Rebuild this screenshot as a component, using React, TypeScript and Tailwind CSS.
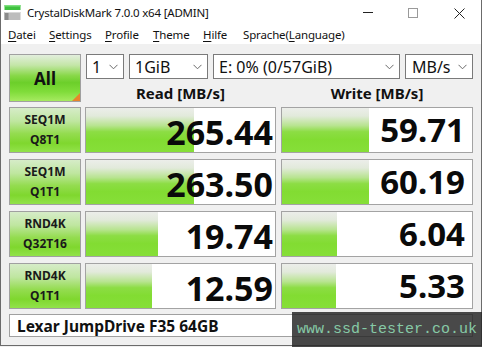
import React from "react";

const rows = [
  { l1: "SEQ1M", l2: "Q8T1", r: "265.44", w: "59.71", rw: 108, ww: 87 },
  { l1: "SEQ1M", l2: "Q1T1", r: "263.50", w: "60.19", rw: 108, ww: 87 },
  { l1: "RND4K", l2: "Q32T16", r: "19.74", w: "6.04", rw: 72, ww: 55 },
  { l1: "RND4K", l2: "Q1T1", r: "12.59", w: "5.33", rw: 66, ww: 54 },
];

const barBg =
  "linear-gradient(to bottom, #eceeea 0%, #e2eadb 18%, #b8e490 40%, #8cdd44 54%, #82dc32 72%, #86df38 100%)";
const labelBg =
  "bg-[linear-gradient(to_bottom,#d6ecc8_0%,#bfe6a0_30%,#94dc50_58%,#7fd72e_80%,#92e24a_100%)]";

function Chevron() {
  return (
    <svg width="9" height="6" viewBox="0 0 9 6" className="shrink-0">
      <polyline points="0.5,0.8 4.5,4.8 8.5,0.8" fill="none" stroke="#6a6a6a" strokeWidth="1" />
    </svg>
  );
}

function Select({ w, text, pl = 5 }: { w: number; text: string; pl?: number }) {
  return (
    <div
      className="h-[25px] border border-[#7a7a7a] bg-white flex items-center justify-between pr-[5px] text-[16px] text-[#111] leading-[20px]"
      style={{ width: w, paddingLeft: pl }}
    >
      <span className="pt-[1px]">{text}</span>
      <Chevron />
    </div>
  );
}

function BarBox({ value, bar, w, pr, pt, size }: { value: string; bar: number; w: number; pr: number; pt: number; size: number }) {
  return (
    <div className="relative h-[46px] border border-[#a3a3a3] bg-white" style={{ width: w }}>
      <div className="absolute left-0 top-0 bottom-0" style={{ width: bar, background: barBg }} />
      <div
        className="absolute inset-0 flex items-start justify-end font-bold leading-[36px] text-[#0a0a0a]"
        style={{ paddingRight: pr, paddingTop: pt, fontSize: size }}
      >
        {value}
      </div>
    </div>
  );
}

export default function App() {
  const menu = [
    { u: "D", rest: "atei", w: 41 },
    { u: "S", rest: "ettings", w: 56 },
    { u: "P", rest: "rofile", w: 48 },
    { u: "T", rest: "heme", w: 50 },
    { u: "H", rest: "ilfe", w: 40 },
  ];
  return (
    <div className="relative w-[482px] h-[347px] overflow-hidden bg-[#f0f0f0] font-['Noto_Sans',sans-serif]">
      <div className="h-[346px] flex flex-col border-l border-r border-b border-[#6b6b6b]">
        {/* title bar */}
        <div className="h-[25px] bg-white flex items-center shrink-0 relative">
          <svg width="17" height="16" viewBox="0 0 17 16" className="ml-[3px] mt-[1px]">
            <rect x="0.5" y="0" width="16" height="5" fill="#3fc13f" />
            <rect x="0.5" y="0" width="16" height="1.5" fill="#7ee07e" />
            <rect x="0.5" y="7" width="16" height="8" fill="#bdbdbd" />
            <rect x="0.5" y="7" width="4" height="8" fill="#8a8a8a" />
            <rect x="0.5" y="7" width="16" height="1" fill="#d8d8d8" />
          </svg>
          <span className="ml-[6px] text-[11.5px] text-[#111] tracking-[-0.2px]">CrystalDiskMark 7.0.0 x64 [ADMIN]</span>
          <div className="absolute left-[362px] top-[12px] w-[10px] h-[1px] bg-[#222]" />
          <div className="absolute left-[407px] top-[8px] w-[10px] h-[10px] border border-[#9a9a9a]" />
          <svg className="absolute left-[453px] top-[8px]" width="11" height="11" viewBox="0 0 11 11">
            <path d="M0.5 0.5 L10.5 10.5 M10.5 0.5 L0.5 10.5" stroke="#222" strokeWidth="1" />
          </svg>
        </div>
        {/* menu bar */}
        <div className="h-[20px] bg-white flex items-center pl-[7px] text-[11.5px] tracking-[-0.15px] text-[#111] shrink-0 border-b border-[#f0f0f0]">
          {menu.map((m) => (
            <span key={m.u + m.rest} style={{ width: m.w }} className="shrink-0">
              <span className="underline underline-offset-2">{m.u}</span>
              {m.rest}
            </span>
          ))}
          <span className="shrink-0">
            Sprache(<span className="underline underline-offset-2">L</span>anguage)
          </span>
        </div>
        {/* content */}
        <div className="flex-1 bg-[#f0f0f0] pl-[8px] pt-[9px]">
          <div className="flex">
            <div
              className={
                "relative w-[72px] h-[48px] border border-[#a0a0a0] flex items-center justify-center text-[17px] font-bold text-[#111] bg-[linear-gradient(to_bottom,#e2eedc_0%,#c4e6a8_22%,#88d848_45%,#6ccf2a_60%,#80dc3a_80%,#a6ea60_100%)]"
              }
            >
              <span className="pt-[1px]">All</span>
              <div className="absolute right-0 bottom-0 w-0 h-0 border-l-[8px] border-l-transparent border-b-[8px] border-b-[#e8842c]" />
            </div>
            <div className="ml-[4px] flex flex-col">
              <div className="flex gap-[5px] pl-[1px]">
                <Select w={38} text="1" />
                <Select w={79} text="1GiB" />
                <Select w={187} text="E: 0% (0/57GiB)" />
                <Select w={68} text="MB/s" pl={6} />
              </div>
              <div className="flex h-[23px] text-[15px] font-bold text-[#111] leading-[18px] pt-[5px]">
                <div className="w-[191px] text-center">Read [MB/s]</div>
                <div className="w-[192px] ml-[5px] text-center">Write [MB/s]</div>
              </div>
            </div>
          </div>
          <div className="flex flex-col gap-[6px] mt-[5px]">
            {rows.map((r, i) => (
              <div key={i} className="flex">
                <div
                  className={
                    "w-[72px] h-[46px] border border-[#a0a0a0] flex flex-col items-center justify-center text-[12px] font-bold leading-[20px] text-[#1a1a1a] " +
                    labelBg
                  }
                >
                  <span>{r.l1}</span>
                  <span>{r.l2}</span>
                </div>
                <div className="ml-[4px]">
                  <BarBox value={r.r} bar={r.rw} w={191} pr={2} pt={6} size={34} />
                </div>
                <div className="ml-[5px]">
                  <BarBox value={r.w} bar={r.ww} w={192} pr={7} pt={4} size={33} />
                </div>
              </div>
            ))}
          </div>
          <div className="mt-[5px] w-[464px] h-[23px] border border-[#a0a0a0] bg-white flex items-center pl-[7px] text-[15.5px] font-bold text-[#111] leading-[20px]">
            Lexar JumpDrive F35 64GB
          </div>
        </div>
      </div>
      {/* watermark */}
      <div className="absolute left-[292px] top-[312px] w-[190px] h-[35px] bg-[rgba(38,38,38,0.84)] flex items-start pl-[5px] pt-[9px]">
        <span className="font-['Liberation_Mono',monospace] text-[15px] leading-[18px] text-[#86c9a6]">
          www.ssd-tester.co.uk
        </span>
      </div>
    </div>
  );
}
